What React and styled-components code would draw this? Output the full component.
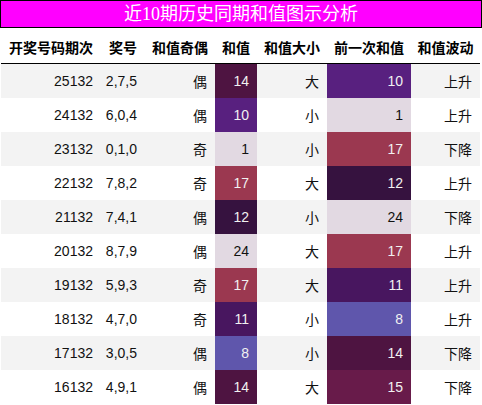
import React from "react";
import styled, { createGlobalStyle } from "styled-components";

const GlobalStyle = createGlobalStyle`
  html, body {
    margin: 0;
    padding: 0;
    background: #ffffff;
  }
  body {
    font-family: "Liberation Sans", "Noto Sans CJK SC", sans-serif;
  }
`;

const COLS = "100px 44px 70px 42px 70px 84px 69px";

const Page = styled.div`
  width: 482px;
`;

const Title = styled.div`
  box-sizing: border-box;
  height: 28px;
  border: 1px solid #000;
  background: #ff00ff;
  color: #ffffff;
  font-family: "Liberation Serif", "Noto Sans CJK SC", serif;
  font-size: 18px;
  line-height: 26px;
  text-align: center;
`;

const Table = styled.div`
  margin: 0 1px;
  width: 479px;
`;

const HeadRow = styled.div`
  display: grid;
  grid-template-columns: ${COLS};
  height: 35px;
  border-bottom: 1px solid #000;
  background: #ffffff;
`;

const HeadCell = styled.div`
  display: flex;
  align-items: center;
  justify-content: center;
  padding-top: 2px;
  font-weight: bold;
  font-size: 14px;
  color: #000;
  white-space: nowrap;
`;

const Row = styled.div`
  display: grid;
  grid-template-columns: ${COLS};
  height: 34px;
  background: ${(p) => (p.$striped ? "#f3f3f3" : "#ffffff")};
`;

const Cell = styled.div`
  display: flex;
  align-items: center;
  justify-content: flex-end;
  padding-right: 8px;
  font-size: 14px;
  color: ${(p) => p.$fg || "#111"};
  background: ${(p) => p.$bg || "transparent"};
  white-space: nowrap;
`;

const PALETTE = {
  1: ["#e2d9e2", "#111"],
  24: ["#e2d9e2", "#111"],
  8: ["#5f56ac", "#f1f1f1"],
  10: ["#58207f", "#f1f1f1"],
  11: ["#48165f", "#f1f1f1"],
  12: ["#36123f", "#f1f1f1"],
  14: ["#4e1441", "#f1f1f1"],
  15: ["#681b4a", "#f1f1f1"],
  17: ["#9b3850", "#f1f1f1"],
};

const rows = [
  ["25132", "2,7,5", "偶", 14, "大", 10, "上升"],
  ["24132", "6,0,4", "偶", 10, "小", 1, "上升"],
  ["23132", "0,1,0", "奇", 1, "小", 17, "下降"],
  ["22132", "7,8,2", "奇", 17, "大", 12, "上升"],
  ["21132", "7,4,1", "偶", 12, "小", 24, "下降"],
  ["20132", "8,7,9", "偶", 24, "大", 17, "上升"],
  ["19132", "5,9,3", "奇", 17, "大", 11, "上升"],
  ["18132", "4,7,0", "奇", 11, "小", 8, "上升"],
  ["17132", "3,0,5", "偶", 8, "小", 14, "下降"],
  ["16132", "4,9,1", "偶", 14, "大", 15, "下降"],
];

const headers = ["开奖号码期次", "奖号", "和值奇偶", "和值", "和值大小", "前一次和值", "和值波动"];

function HeatCell({ value }) {
  const [bg, fg] = PALETTE[value];
  return (
    <Cell $bg={bg} $fg={fg}>
      {value}
    </Cell>
  );
}

export default function App() {
  return (
    <Page>
      <GlobalStyle />
      <Title>近10期历史同期和值图示分析</Title>
      <Table>
        <HeadRow>
          {headers.map((h) => (
            <HeadCell key={h}>{h}</HeadCell>
          ))}
        </HeadRow>
        {rows.map((r, i) => (
          <Row key={r[0]} $striped={i % 2 === 0}>
            <Cell>{r[0]}</Cell>
            <Cell>{r[1]}</Cell>
            <Cell>{r[2]}</Cell>
            <HeatCell value={r[3]} />
            <Cell>{r[4]}</Cell>
            <HeatCell value={r[5]} />
            <Cell>{r[6]}</Cell>
          </Row>
        ))}
      </Table>
    </Page>
  );
}
